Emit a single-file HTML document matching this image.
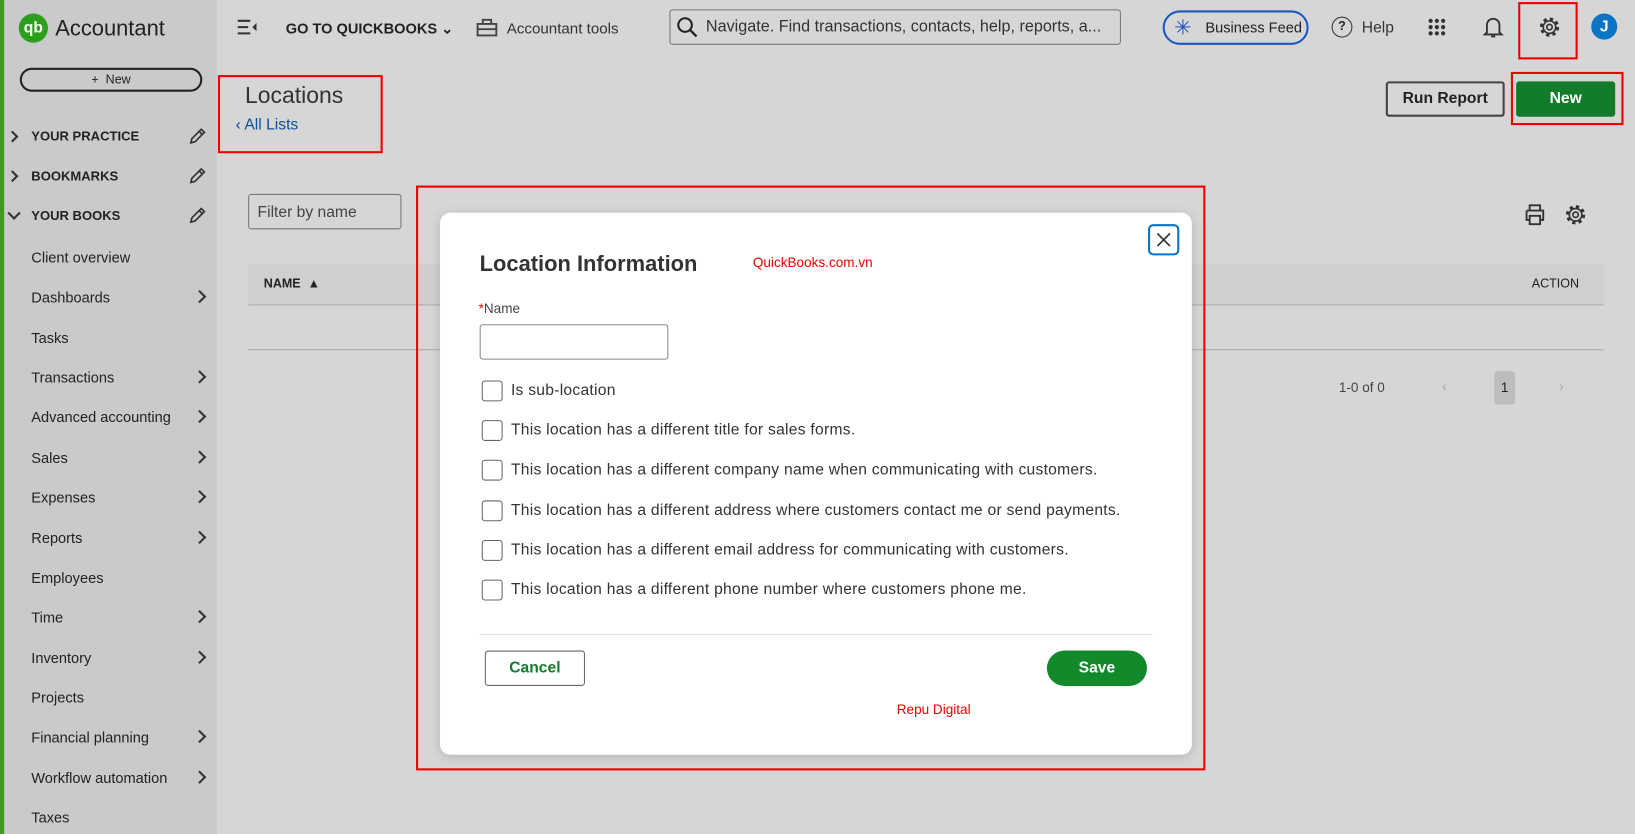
<!DOCTYPE html>
<html><head><meta charset="utf-8"><style>
*{box-sizing:border-box;margin:0;padding:0}
html,body{width:1635px;height:834px;overflow:hidden;background:#d6d6d6;font-family:"Liberation Sans",Arial,sans-serif;color:#222}
#w{position:absolute;left:0;top:0;width:1568px;height:800px;transform:scale(1.04273,1.0425);transform-origin:0 0;background:#d6d6d6}
.a{position:absolute;white-space:nowrap}
.side{position:absolute;left:0;top:0;width:208px;height:800px;background:#c9cacb}
.stripe{position:absolute;left:0;top:0;width:4px;height:800px;background:#3f9a1e}
.nav{font-size:14px;color:#222;left:30px}
.chev{position:absolute;left:187px;width:9px;height:9px;border-right:2px solid #333;border-top:2px solid #333;transform:rotate(45deg)}
.red{position:absolute;border:2.5px solid #e00}
.cb{position:absolute;left:462px;width:20px;height:20px;border:1.5px solid #666;border-radius:3px}
.ct{position:absolute;left:490px;font-size:15px;color:#333;white-space:nowrap;letter-spacing:.25px}
</style></head><body><div id="w">
<div class="side"></div><div class="stripe"></div>
<div class="a" style="left:18px;top:13px;width:28px;height:28px;border-radius:50%;background:#2ca01c;color:#fff;font-size:15px;font-weight:bold;text-align:center;line-height:28px">qb</div>
<div class="a" style="left:53px;top:16px;font-size:21px;color:#222">Accountant</div>
<div class="a" style="left:19px;top:65px;width:175px;height:23px;border:2px solid #222;border-radius:12px;font-size:12px;text-align:center;line-height:19px">+&nbsp;&nbsp;New</div>
<div class="a nav" style="top:124px;font-size:12.5px;font-weight:bold">YOUR PRACTICE</div>
<div class="a nav" style="top:162px;font-size:12.5px;font-weight:bold">BOOKMARKS</div>
<div class="a nav" style="top:200px;font-size:12.5px;font-weight:bold">YOUR BOOKS</div>
<div class="chev" style="left:8px;top:127px;width:8px;height:8px"></div>
<div class="chev" style="left:8px;top:165px;width:8px;height:8px"></div>
<div class="chev" style="left:9px;top:200px;width:9px;height:9px;transform:rotate(135deg)"></div>
<svg class="a" style="left:180px;top:122px" width="18" height="18"><path d="M3 15l1-4 9-9 3 3-9 9z M11 4l3 3" fill="none" stroke="#333" stroke-width="1.6"/></svg>
<svg class="a" style="left:180px;top:160px" width="18" height="18"><path d="M3 15l1-4 9-9 3 3-9 9z M11 4l3 3" fill="none" stroke="#333" stroke-width="1.6"/></svg>
<svg class="a" style="left:180px;top:198px" width="18" height="18"><path d="M3 15l1-4 9-9 3 3-9 9z M11 4l3 3" fill="none" stroke="#333" stroke-width="1.6"/></svg>
<div class="a nav" style="top:239px">Client overview</div>
<div class="a nav" style="top:277px">Dashboards</div><div class="chev" style="top:280px"></div>
<div class="a nav" style="top:316px">Tasks</div>
<div class="a nav" style="top:354px">Transactions</div><div class="chev" style="top:357px"></div>
<div class="a nav" style="top:392px">Advanced accounting</div><div class="chev" style="top:395px"></div>
<div class="a nav" style="top:431px">Sales</div><div class="chev" style="top:434px"></div>
<div class="a nav" style="top:469px">Expenses</div><div class="chev" style="top:472px"></div>
<div class="a nav" style="top:508px">Reports</div><div class="chev" style="top:511px"></div>
<div class="a nav" style="top:546px">Employees</div>
<div class="a nav" style="top:584px">Time</div><div class="chev" style="top:587px"></div>
<div class="a nav" style="top:623px">Inventory</div><div class="chev" style="top:626px"></div>
<div class="a nav" style="top:661px">Projects</div>
<div class="a nav" style="top:699px">Financial planning</div><div class="chev" style="top:702px"></div>
<div class="a nav" style="top:738px">Workflow automation</div><div class="chev" style="top:741px"></div>
<div class="a nav" style="top:776px">Taxes</div>

<!-- top bar -->
<svg class="a" style="left:227px;top:18px" width="20" height="16"><path d="M1 2h12M1 8h10M1 14h12" stroke="#333" stroke-width="2"/><path d="M19 4v8l-4-4z" fill="#333"/></svg>
<div class="a" style="left:274px;top:19px;font-size:14px;font-weight:bold;color:#222">GO TO QUICKBOOKS ⌄</div>
<svg class="a" style="left:456px;top:15px" width="22" height="22"><path d="M2 8h18v11H2z M2 13h18 M7 8V4h8v4" fill="none" stroke="#444" stroke-width="1.8"/></svg>
<div class="a" style="left:486px;top:20px;font-size:14.5px;color:#333">Accountant tools</div>
<div class="a" style="left:642px;top:9px;width:433px;height:34px;border:1.5px solid #777;border-radius:3px"></div>
<svg class="a" style="left:648px;top:15px" width="22" height="22"><circle cx="9" cy="9" r="6.5" fill="none" stroke="#222" stroke-width="2"/><line x1="14" y1="14" x2="20" y2="20" stroke="#222" stroke-width="2.2"/></svg>
<div class="a" style="left:677px;top:17px;font-size:15.5px;color:#333">Navigate. Find transactions, contacts, help, reports, a...</div>
<div class="a" style="left:1115px;top:10px;width:140px;height:33px;border:2px solid #1a56c4;border-radius:17px"></div>
<div class="a" style="left:1126px;top:14px;font-size:20px;color:#1a56c4">✳</div>
<div class="a" style="left:1156px;top:18px;font-size:14px;color:#222">Business Feed</div>
<div class="a" style="left:1277px;top:16px;width:20px;height:20px;border:1.8px solid #333;border-radius:50%;font-size:12px;text-align:center;line-height:17px;font-weight:bold">?</div>
<div class="a" style="left:1306px;top:18px;font-size:15px;color:#333">Help</div>
<svg class="a" style="left:1369px;top:17px" width="18" height="18"><g fill="#333"><circle cx="3" cy="3" r="2"/><circle cx="9" cy="3" r="2"/><circle cx="15" cy="3" r="2"/><circle cx="3" cy="9" r="2"/><circle cx="9" cy="9" r="2"/><circle cx="15" cy="9" r="2"/><circle cx="3" cy="15" r="2"/><circle cx="9" cy="15" r="2"/><circle cx="15" cy="15" r="2"/></g></svg>
<svg class="a" style="left:1421px;top:14px" width="22" height="24"><path d="M5 17V10a6 6 0 0 1 12 0v7l2 2H3z M9 21h4" fill="none" stroke="#333" stroke-width="1.8"/></svg>
<svg class="a" style="left:1475px;top:15px" width="22" height="22"><circle cx="11" cy="11" r="7.5" fill="none" stroke="#333" stroke-width="3.5" stroke-dasharray="3 2.9"/><circle cx="11" cy="11" r="6" fill="none" stroke="#333" stroke-width="1.6"/><circle cx="11" cy="11" r="2.6" fill="none" stroke="#333" stroke-width="1.6"/></svg>
<div class="a" style="left:1526px;top:13px;width:25px;height:25px;border-radius:50%;background:#0b74c4;color:#fff;font-weight:bold;font-size:15px;text-align:center;line-height:25px">J</div>

<!-- page -->
<div class="a" style="left:235px;top:79px;font-size:22px;color:#333">Locations</div>
<div class="a" style="left:226px;top:111px;font-size:15px;color:#0b4f9c">‹ All Lists</div>
<div class="a" style="left:1329px;top:78px;width:114px;height:34px;border:2px solid #444;border-radius:3px;font-size:15px;font-weight:bold;text-align:center;line-height:30px">Run Report</div>
<div class="a" style="left:1454px;top:78px;width:95px;height:34px;background:#127c2a;border-radius:3px;color:#fff;font-size:15px;font-weight:bold;text-align:center;line-height:34px">New</div>
<div class="a" style="left:238px;top:186px;width:147px;height:34px;border:1.5px solid #777;border-radius:3px;font-size:15px;color:#444;padding:8px 8px">Filter by name</div>
<div class="a" style="left:238px;top:253px;width:1300px;height:40px;background:#cfcfcf;border-bottom:1px solid #aaa"></div>
<div class="a" style="left:253px;top:265px;font-size:12px;font-weight:bold;color:#222">NAME &nbsp;▲</div>
<div class="a" style="left:1469px;top:265px;font-size:12px;color:#222">ACTION</div>
<div class="a" style="left:238px;top:335px;width:1300px;height:1px;background:#aaa"></div>
<div class="a" style="left:1284px;top:364px;font-size:13px;color:#444">1-0 of 0</div>
<div class="a" style="left:1383px;top:362px;font-size:14px;color:#aaa">‹</div>
<div class="a" style="left:1433px;top:356px;width:20px;height:32px;background:#bdbdbd;border-radius:3px;font-size:13px;text-align:center;line-height:32px">1</div>
<div class="a" style="left:1495px;top:362px;font-size:14px;color:#aaa">›</div>
<svg class="a" style="left:1461px;top:194px" width="22" height="24"><path d="M6 8V3h10v5 M3 8h16v9h-3 M6 17H3V8 M6 13h10v8H6z" fill="none" stroke="#333" stroke-width="1.8"/></svg>
<svg class="a" style="left:1500px;top:195px" width="22" height="22"><circle cx="11" cy="11" r="7.5" fill="none" stroke="#333" stroke-width="3.5" stroke-dasharray="3 2.9"/><circle cx="11" cy="11" r="6" fill="none" stroke="#333" stroke-width="1.6"/><circle cx="11" cy="11" r="2.6" fill="none" stroke="#333" stroke-width="1.6"/></svg>

<!-- modal -->
<div class="a" style="left:422px;top:204px;width:721px;height:520px;background:#fff;border-radius:10px;box-shadow:0 2px 10px rgba(0,0,0,.15)"></div>
<div class="a" style="left:460px;top:242px;font-size:21px;font-weight:bold;color:#333">Location Information</div>
<div class="a" style="left:722px;top:244px;font-size:13px;color:#e00;font-family:'Liberation Sans Narrow','Liberation Sans',sans-serif">QuickBooks.com.vn</div>
<div class="a" style="left:1101px;top:215px;width:30px;height:30px;border:2px solid #0b74c4;border-radius:5px"></div>
<svg class="a" style="left:1108px;top:222px" width="16" height="16"><path d="M2 2l12 12M14 2L2 14" stroke="#333" stroke-width="1.6"/></svg>
<div class="a" style="left:459px;top:288px;font-size:13px;color:#444"><span style="color:#e00">*</span>Name</div>
<div class="a" style="left:460px;top:311px;width:181px;height:34px;border:1.5px solid #888;border-radius:3px"></div>
<div class="cb" style="top:365px"></div><div class="ct" style="top:366px">Is sub-location</div>
<div class="cb" style="top:403px"></div><div class="ct" style="top:404px">This location has a different title for sales forms.</div>
<div class="cb" style="top:441px"></div><div class="ct" style="top:442px">This location has a different company name when communicating with customers.</div>
<div class="cb" style="top:480px"></div><div class="ct" style="top:481px">This location has a different address where customers contact me or send payments.</div>
<div class="cb" style="top:518px"></div><div class="ct" style="top:519px">This location has a different email address for communicating with customers.</div>
<div class="cb" style="top:556px"></div><div class="ct" style="top:557px">This location has a different phone number where customers phone me.</div>
<div class="a" style="left:460px;top:608px;width:645px;height:1px;background:#ddd"></div>
<div class="a" style="left:465px;top:624px;width:96px;height:34px;border:1.5px solid #666;border-radius:3px;color:#127c2a;font-weight:bold;font-size:15px;text-align:center;line-height:31px">Cancel</div>
<div class="a" style="left:1004px;top:624px;width:96px;height:34px;border-radius:17px;background:#128a2b;color:#fff;font-weight:bold;font-size:15px;text-align:center;line-height:34px">Save</div>
<div class="a" style="left:860px;top:673px;font-size:13px;color:#e00">Repu Digital</div>

<!-- red boxes -->
<div class="red" style="left:209px;top:72px;width:158px;height:75px"></div>
<div class="red" style="left:399px;top:178px;width:757px;height:561px"></div>
<div class="red" style="left:1456px;top:2px;width:57px;height:55px"></div>
<div class="red" style="left:1449px;top:69px;width:108px;height:51px"></div>
</div></body></html>
